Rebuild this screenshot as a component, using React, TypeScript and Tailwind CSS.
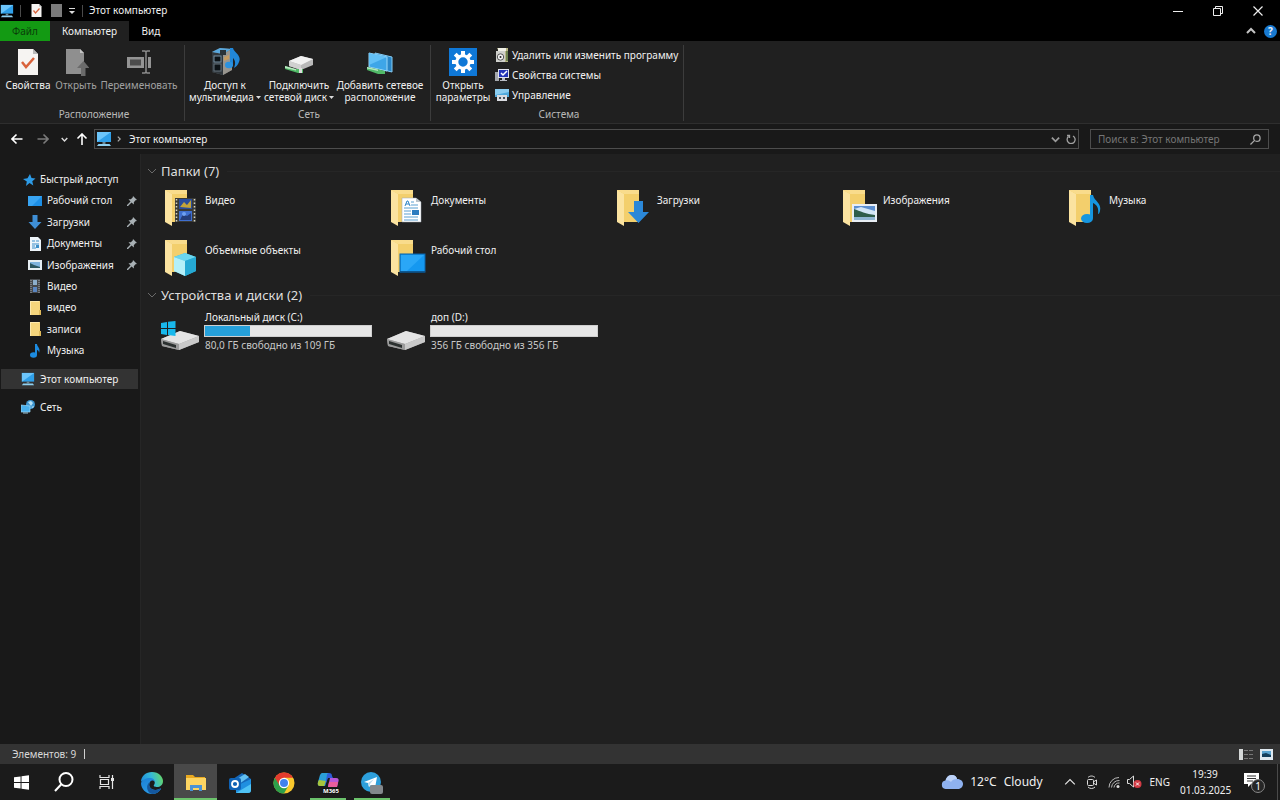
import type { ReactNode } from 'react';

/**
 * File explorer window ("This PC") with ribbon, navigation pane and taskbar
 */

interface IconProps {
  className?: string;
}

const FOLDERS = [
  { name: 'Видео', overlay: 'video' },
  { name: 'Документы', overlay: 'document' },
  { name: 'Загрузки', overlay: 'download' },
  { name: 'Изображения', overlay: 'picture' },
  { name: 'Музыка', overlay: 'music' },
  { name: 'Объемные объекты', overlay: 'cube' },
  { name: 'Рабочий стол', overlay: 'desktop' },
];

const DRIVES = [
  { name: 'Локальный диск (C:)', info: '80,0 ГБ свободно из 109 ГБ', used: 27, system: true },
  { name: 'доп (D:)', info: '356 ГБ свободно из 356 ГБ', used: 0, system: false },
];

function MonitorIcon({ className = 'size-4' }: IconProps) {
  return (
    <svg viewBox="0 0 16 16" className={className} aria-hidden="true">
      <rect x="1" y="1" width="14" height="10" fill="#2f9fe8" />
      <path d="M1 11V1h14z" fill="#6cc5fa" />
      <path d="M6.500 11h3v2h-3z" fill="#6a8794" />
      <path d="M2.500 13h11l1.500 2H1z" fill="#8fd0f0" />
    </svg>
  );
}

function CheckPageIcon({ className }: IconProps) {
  return (
    <svg viewBox="0 0 20 26" className={className} aria-hidden="true">
      <path d="M0 0h15l5 5v21H0z" fill="#f6f4f2" />
      <path d="M15 0v5h5z" fill="#b9b9b9" />
      <path d="M4 13l4 5 8-9" fill="none" stroke="#d9623b" strokeWidth="2.500" />
    </svg>
  );
}

function OpenIcon() {
  return (
    <svg viewBox="0 0 26 28" className="h-7 w-[26px]" aria-hidden="true">
      <path d="M3 1h14l4 4v21H3z" fill="#8f8f8f" />
      <path d="M17 1v4h4z" fill="#c4c4c4" />
      <path d="M18 28V20h-4l6.500-7 6 7h-4v8z" fill="#6b6b6b" />
    </svg>
  );
}

function RenameIcon() {
  return (
    <svg viewBox="0 0 28 28" className="size-7" aria-hidden="true">
      <rect x="2" y="9" width="24" height="11" fill="#949494" />
      <rect x="5" y="11.500" width="11" height="6" fill="#4c4c4c" />
      <rect x="19" y="8" width="4" height="13" fill="#202020" />
      <path d="M21 4v20M17 3h3l1 1 1-1h3M17 25h3l1-1 1 1h3" fill="none" stroke="#8c8c8c" strokeWidth="1.500" />
    </svg>
  );
}

function MediaIcon() {
  return (
    <svg viewBox="0 0 30 28" className="h-7 w-[30px]" aria-hidden="true">
      <path d="M2 4l8-4 12 1v21l-9 5-11-3z" fill="#5d6468" />
      <path d="M2 4l11 2v21L2 24z" fill="#30373c" />
      <path d="M2 4l8-4 12 1-9 5z" fill="#58a7dc" />
      <path d="M13 6l9-5v21l-9 5z" fill="#99968f" />
      <rect x="4" y="8" width="7" height="6" fill="#0d1317" stroke="#7791a3" />
      <rect x="4" y="16" width="7" height="7" fill="#0d1317" stroke="#66757e" />
      <path d="M10 2h6v5h-6z" fill="#2b3338" />
      <path d="M14 9l5-2v4l-5 2z" fill="#c79d62" />
      <path d="M20 0h3c1 5 9 7 6 14-1 3-3 5-5 6 2-5 1-8-1-10v8h-3z" fill="#2187d8" />
      <ellipse cx="19" cy="17" rx="4" ry="3.200" fill="#2a92e0" />
    </svg>
  );
}

function NetworkDriveIcon() {
  return (
    <svg viewBox="0 0 30 28" className="h-7 w-[30px]" aria-hidden="true">
      <path d="M5 13l12-5 12 3v6l-12 5-12-4z" fill="#b9b9b9" />
      <path d="M5 13l12-5 12 3-12 6z" fill="#f1f1f1" />
      <path d="M5 13l12 4v5L5 18z" fill="#d0d0d0" />
      <path d="M1 18l10 3h8v4h-5L1 21z" fill="#4fb865" />
      <path d="M1 18l11 3v1.500L1 20z" fill="#b7e6bf" />
      <path d="M15 20h3v5h-3z" fill="#dcdcdc" />
    </svg>
  );
}

function NetworkPlaceIcon() {
  return (
    <svg viewBox="0 0 28 28" className="size-7" aria-hidden="true">
      <path d="M9 5l17 4v15L9 20z" fill="#2a86c6" stroke="#86cdf4" />
      <path d="M3 5l18 4v14L3 19z" fill="#3ea6e8" stroke="#9cd9fa" />
      <path d="M3 5l18 4L3 17z" fill="#63c1f7" />
      <path d="M1 19l10 2 8 2v3h-7L1 22z" fill="#51b968" />
      <path d="M1 19l11 2.500v1.500L1 20.500z" fill="#b4e6c0" />
    </svg>
  );
}

function SettingsIcon() {
  return (
    <svg viewBox="0 0 28 28" className="size-7" aria-hidden="true">
      <rect width="28" height="28" fill="#0f78d7" />
      <path
        d="M14 3v5M14 20v5M3 14h5M20 14h5M6.200 6.200l4 4M17.800 17.800l4 4M21.800 6.200l-4 4M10.200 17.800l-4 4"
        stroke="#fff"
        strokeWidth="4"
      />
      <circle cx="14" cy="14" r="6.200" fill="#0f78d7" stroke="#fff" strokeWidth="3" />
    </svg>
  );
}

function UninstallIcon() {
  return (
    <svg viewBox="0 0 14 14" className="size-[14px]" aria-hidden="true">
      <path d="M2 0h11v14h-3z" fill="#b7b485" />
      <path d="M3 0h8v3H3z" fill="#f0f0e6" />
      <rect x="1" y="3" width="9" height="11" fill="#cfd0cc" />
      <circle cx="5.500" cy="9" r="3.200" fill="#f4f4f4" stroke="#555" />
      <circle cx="5.500" cy="9" r="1" fill="#222" />
      <path d="M11 3h2v10h-2z" fill="#6d8250" />
    </svg>
  );
}

function SystemIcon() {
  return (
    <svg viewBox="0 0 14 14" className="size-[14px]" aria-hidden="true">
      <rect x="0" y="4" width="4" height="9" fill="#a5a8ad" />
      <rect x="3" y="1" width="11" height="9" fill="#dfe2ee" />
      <rect x="4" y="2" width="9" height="7" fill="#2334b6" />
      <path d="M6 5l2 2 4-4" fill="none" stroke="#fff" strokeWidth="1.500" />
      <path d="M7 10h3v2h2v1H5v-1h2z" fill="#b9bcc4" />
    </svg>
  );
}

function ManageIcon() {
  return (
    <svg viewBox="0 0 14 14" className="size-[14px]" aria-hidden="true">
      <rect width="14" height="8" y="1" fill="#4fa9dc" />
      <path d="M0 1h14v3L0 7z" fill="#8ccdf0" />
      <rect x="2" y="7" width="10" height="6" fill="#d9dbe0" />
      <path d="M4 9h2v2H4zM8 9h2v2H8z" fill="#46505a" />
    </svg>
  );
}

function Overlay({ kind }: { kind: string }) {
  switch (kind) {
    case 'video':
      return (
        <g>
          <rect x="11" y="9" width="21" height="24" fill="#3a3a36" />
          <path d="M12.500 10v23M30.500 10v23" stroke="#d8d4c0" strokeWidth="1.500" strokeDasharray="1.500 2" />
          <rect x="15" y="10" width="13" height="10" fill="#284c9c" />
          <rect x="15" y="22" width="13" height="10" fill="#3f6fd0" />
          <path d="M16 18l4-5 3 3 4-5v8z" fill="#c2a43a" />
          <path d="M16 31l3-6 4 2 4-3v7z" fill="#253d7a" />
          <circle cx="20" cy="25" r="2" fill="#6ea0f0" />
        </g>
      );
    case 'document':
      return (
        <g>
          <path d="M12 9h14l5 4v20H12z" fill="#fff" stroke="#9aa7b0" strokeWidth="0.500" />
          <path d="M26 9v4h5z" fill="#b9c3ca" />
          <path d="M15 17l2-5h1l2 5M16 15h3" stroke="#2d83c7" fill="none" />
          <path d="M21 13h3M21 16h7M14 19h14M14 22h7M14 25h7M14 28h14M14 31h14" stroke="#5b9fd0" />
          <rect x="22" y="21" width="7" height="5" fill="#2c7cc0" />
        </g>
      );
    case 'download':
      return <path d="M18 12h9v11h6L22.500 34 12 23h6z" fill="#2b88d8" />;
    case 'picture':
      return (
        <g>
          <rect x="10" y="15" width="25" height="18" fill="#e9eef4" />
          <rect x="12" y="17" width="21" height="14" fill="#5c8fd0" />
          <path d="M12 20l7-2 14 4v5H12z" fill="#d3e6f6" />
          <path d="M12 20c6 2 12 5 21 6v2H12z" fill="#2f5d4a" />
          <path d="M12 28h21v3H12z" fill="#8fb5d2" />
        </g>
      );
    case 'music':
      return (
        <g fill="#1696e0">
          <ellipse cx="19" cy="29.500" rx="6" ry="4.500" />
          <path d="M22 6h3c1 6 9 8 7 16-.5 2-1 3-2 3 1-6-1-9-5-11v15h-3z" />
        </g>
      );
    case 'cube':
      return (
        <g>
          <path d="M21 14l11 4v14l-11 5-11-5V18z" fill="#35b8dc" />
          <path d="M10 18l11-4 11 4-11 4z" fill="#6bd6ee" />
          <path d="M10 18l11 4v15l-11-5z" fill="#b4eff8" />
          <path d="M21 22l11-4v14l-11 5z" fill="#25a9d4" />
        </g>
      );
    default:
      return (
        <g>
          <rect x="10" y="15" width="25" height="18" fill="#1598f0" stroke="#0b63a8" />
          <path d="M11 16h23L17 32h-6z" fill="#2aa7f7" />
          <path d="M10 33h25" stroke="#0c4d7f" strokeWidth="1.500" />
        </g>
      );
  }
}

function FolderIcon({ kind }: { kind: string }) {
  return (
    <svg viewBox="0 0 36 38" className="h-[38px] w-9 shrink-0" aria-hidden="true">
      <path d="M1 1h22v32H8z" fill="#f3cf6c" />
      <path d="M1 1l7 4v32l-7-4z" fill="#fbe3a0" />
      <path d="M8 5l-7-4h22v4z" fill="#f9dc8c" />
      <Overlay kind={kind} />
    </svg>
  );
}

function DriveIcon({ system }: { system: boolean }) {
  return (
    <svg viewBox="0 0 40 32" className="h-8 w-10 shrink-0" aria-hidden="true">
      <path d="M1 20l19-8 19 5v6l-20 8-17-4z" fill="#a4a4a4" />
      <path d="M1 20l19-8 19 5-20 8z" fill="#e4e4e4" />
      <path d="M1 20l18 5v6L2 27z" fill="#9b9b9b" />
      <path d="M3 22l13 4v3L3 25z" fill="#2c3130" />
      <path d="M19 25l20-8v6l-20 8z" fill="#c9c9c9" />
      {system && (
        <path d="M1 4l6-1v6H1zM8 2.800L15.500 2v7H8zM1 10h6v6l-6-1zM8 10h7.500v7L8 16z" fill="#18b8ec" />
      )}
    </svg>
  );
}

function NavIcon({ kind }: { kind: string }) {
  const base = 'size-[14px] shrink-0';
  switch (kind) {
    case 'star':
      return (
        <svg viewBox="0 0 14 14" className={base} aria-hidden="true">
          <path d="M8 1l1.500 4 4 .5-3.200 2.700 1 4.300L7.500 10 4 13l.8-4.500L1 6l4.500-.7z" fill="#2d9be6" />
        </svg>
      );
    case 'desktop':
      return (
        <svg viewBox="0 0 14 14" className={base} aria-hidden="true">
          <path d="M0 2h14v10H0z" fill="#1d8fe6" />
          <path d="M0 2h14L4 12H0z" fill="#38a4f2" />
        </svg>
      );
    case 'download':
      return (
        <svg viewBox="0 0 14 14" className={base} aria-hidden="true">
          <path d="M4.500 0h5v7h4L7 14 .5 7h4z" fill="#3f8fd6" />
        </svg>
      );
    case 'document':
      return (
        <svg viewBox="0 0 14 14" className={base} aria-hidden="true">
          <path d="M2 0h8l3 3v11H2z" fill="#eef5fa" />
          <path d="M4 4h3M8 4h3M4 7h7M4 9h3M4 11h4" stroke="#3c8fc9" strokeWidth="1.200" />
          <path d="M8 8h3v3H8z" fill="#3c8fc9" />
        </svg>
      );
    case 'picture':
      return (
        <svg viewBox="0 0 14 14" className={base} aria-hidden="true">
          <path d="M0 2h14v10H0z" fill="#e6edf2" />
          <path d="M2 4h10v6H2z" fill="#7fb3de" />
          <path d="M2 5l4 2 6 2v1H2z" fill="#2b5560" />
        </svg>
      );
    case 'video':
      return (
        <svg viewBox="0 0 14 14" className={base} aria-hidden="true">
          <path d="M2 0h10v14H2z" fill="#46494c" />
          <path d="M3 1v13M11 1v13" stroke="#a8adb1" strokeDasharray="1 1" />
          <path d="M5 1h4v5H5z" fill="#8caecb" />
          <path d="M5 8h4v5H5z" fill="#5a86c2" />
        </svg>
      );
    case 'folder':
      return (
        <svg viewBox="0 0 14 14" className={base} aria-hidden="true">
          <path d="M2 0h10v9h1v5H2z" fill="#f5d57c" />
          <path d="M2 0h9v1H3v13H2z" fill="#fce9ae" />
          <path d="M11 9h2v5h-2z" fill="#dfb95a" />
        </svg>
      );
    case 'music':
      return (
        <svg viewBox="0 0 14 14" className={base} aria-hidden="true">
          <ellipse cx="5.500" cy="11" rx="3.500" ry="2.800" fill="#1c8be0" />
          <path d="M7 0h2c0 3 4 4 2 9 0-2-1-3-2-3v5H7z" fill="#1c8be0" />
        </svg>
      );
    case 'network':
      return (
        <svg viewBox="0 0 14 14" className={base} aria-hidden="true">
          <circle cx="9.500" cy="4.500" r="4.500" fill="#3d95cf" />
          <path d="M7 2l3-1 2 2-2 3zM10 7l3-1-1 2z" fill="#b4e0f5" />
          <path d="M0 5l9 1v6H0z" fill="#49b1ee" stroke="#9ed8f7" strokeWidth="0.700" />
          <path d="M2 13h5" stroke="#9ac6dc" />
        </svg>
      );
    default:
      return <MonitorIcon className={base} />;
  }
}

function PinIcon() {
  return (
    <svg viewBox="0 0 10 10" className="size-[10px]" aria-hidden="true">
      <path d="M6 0l4 4-1.500.3-1.700 2 .1 2.200L4.500 6.500 1 10H0V9l3.500-3.500-2-2.300L3.800 3.300 5.700 1.500z" fill="#a8b0b4" />
    </svg>
  );
}

function Caret() {
  return (
    <svg viewBox="0 0 5 3" className="mb-px ml-[2px] inline-block h-[3px] w-[5px] align-middle" aria-hidden="true">
      <path d="M0 0h5L2.500 3z" fill="#dcdcdc" />
    </svg>
  );
}

function Chevron({ className }: IconProps) {
  return (
    <svg viewBox="0 0 10 10" className={className} fill="none" stroke="currentColor" aria-hidden="true">
      <path d="M1 3l4 4 4-4" />
    </svg>
  );
}

function TitleBar() {
  return (
    <header className="flex h-[21px] items-center bg-black">
      <MonitorIcon className="size-[14px]" />
      <span className="ml-[6px] h-3 w-px bg-[#4a4a4a]" />
      <button aria-label="Свойства" className="ml-[10px]">
        <CheckPageIcon className="h-[13px] w-[11px]" />
      </button>
      <button aria-label="Новая папка" className="ml-[9px] h-[13px] w-[11px] bg-[#7b7b7b]" />
      <button aria-label="Настройка панели" className="ml-[6px]">
        <svg viewBox="0 0 8 8" className="size-2" aria-hidden="true">
          <path d="M1 1.500h6" stroke="#ddd" />
          <path d="M1 4h6L4 7z" fill="#ddd" />
        </svg>
      </button>
      <span className="ml-[6px] h-3 w-px bg-[#4a4a4a]" />
      <h1 className="ml-[6px] text-[10px]">Этот компьютер</h1>
      <div className="ml-auto flex h-5 pr-[2px]">
        <button aria-label="Свернуть" className="flex w-10 items-center justify-center">
          <svg viewBox="0 0 10 10" className="size-[10px]" stroke="#eee" aria-hidden="true">
            <path d="M0 5.500h10" />
          </svg>
        </button>
        <button aria-label="Восстановить" className="flex w-10 items-center justify-center">
          <svg viewBox="0 0 10 10" className="size-[10px]" fill="none" stroke="#eee" aria-hidden="true">
            <path d="M.5 2.500h7v7h-7zM2.500 2.500v-2h7v7h-2" />
          </svg>
        </button>
        <button aria-label="Закрыть" className="flex w-10 items-center justify-center">
          <svg viewBox="0 0 10 10" className="size-[10px]" stroke="#eee" strokeWidth="1.200" aria-hidden="true">
            <path d="M.5.5l9 9M9.500.5l-9 9" />
          </svg>
        </button>
      </div>
    </header>
  );
}

function RibbonTabs() {
  return (
    <nav className="flex h-5 items-stretch bg-black text-[10px]">
      <button className="w-[50px] bg-[#139a13] text-[#0a3d0a]">Файл</button>
      <button className="w-[79px] bg-[#202020]">Компьютер</button>
      <button className="w-11">Вид</button>
      <div className="ml-auto flex items-center gap-[8px] pr-[3px]">
        <button aria-label="Свернуть ленту">
          <Chevron className="size-[10px] rotate-180 stroke-2 text-[#c4c4c4]" />
        </button>
        <button aria-label="Справка" className="flex size-[13px] items-center justify-center rounded-full bg-[#1879d0] text-[10px] leading-none font-bold">
          ?
        </button>
      </div>
    </nav>
  );
}

interface RibbonButtonProps {
  icon: ReactNode;
  width: string;
  disabled?: boolean;
  children: ReactNode;
}

function RibbonButton({ icon, width, disabled, children }: RibbonButtonProps) {
  return (
    <button
      disabled={disabled}
      className={`flex flex-col items-center pt-[3px] leading-3 whitespace-nowrap ${width} ${disabled ? 'text-[#a0a0a0]' : ''}`}
    >
      <span className="mb-[3px] flex h-7 items-center">{icon}</span>
      <span>{children}</span>
    </button>
  );
}

function RibbonGroup({ label, className, children }: { label: string; className: string; children: ReactNode }) {
  return (
    <section className={`flex flex-col border-r border-[#3c3c3c] ${className}`}>
      <div className="flex h-[60px] items-start">{children}</div>
      <h2 className="mt-[3px] text-center leading-3 text-[#b8b8b8]">{label}</h2>
    </section>
  );
}

function Ribbon() {
  return (
    <div className="flex h-[83px] border-b border-[#2e2e2e] bg-[#202020] pt-1 pb-[2px] text-[10px]">
      <RibbonGroup label="Расположение" className="w-[185px] pl-1">
        <RibbonButton width="w-12" icon={<CheckPageIcon className="h-[26px] w-5" />}>Свойства</RibbonButton>
        <RibbonButton width="w-12" icon={<OpenIcon />} disabled>Открыть</RibbonButton>
        <RibbonButton width="w-[78px]" icon={<RenameIcon />} disabled>Переименовать</RibbonButton>
      </RibbonGroup>
      <RibbonGroup label="Сеть" className="w-[246px] pl-[3px]">
        <RibbonButton width="w-[74px]" icon={<MediaIcon />}>
          Доступ к<br />мультимедиа<Caret />
        </RibbonButton>
        <RibbonButton width="w-[74px]" icon={<NetworkDriveIcon />}>
          Подключить<br />сетевой диск<Caret />
        </RibbonButton>
        <RibbonButton width="w-[88px]" icon={<NetworkPlaceIcon />}>
          Добавить сетевое<br />расположение
        </RibbonButton>
      </RibbonGroup>
      <RibbonGroup label="Система" className="w-[253px] pl-1">
        <RibbonButton width="w-14" icon={<SettingsIcon />}>
          Открыть<br />параметры
        </RibbonButton>
        <div className="ml-1 flex flex-col">
          <button className="flex h-5 items-center gap-[3px]"><UninstallIcon />Удалить или изменить программу</button>
          <button className="flex h-5 items-center gap-[3px]"><SystemIcon />Свойства системы</button>
          <button className="flex h-5 items-center gap-[3px]"><ManageIcon />Управление</button>
        </div>
      </RibbonGroup>
    </div>
  );
}

function AddressBar() {
  return (
    <div className="flex h-[30px] items-center bg-[#191919] pr-[11px] pl-[11px] text-[10px]">
      <button aria-label="Назад">
        <svg viewBox="0 0 12 12" className="size-3" fill="none" stroke="#fff" strokeWidth="1.600" aria-hidden="true">
          <path d="M11.500 6H1M5.500 1.500L1 6l4.500 4.500" />
        </svg>
      </button>
      <button aria-label="Вперед" className="ml-[14px]">
        <svg viewBox="0 0 12 12" className="size-3" fill="none" stroke="#7a7a7a" strokeWidth="1.600" aria-hidden="true">
          <path d="M.5 6H11M6.500 1.500L11 6l-4.500 4.500" />
        </svg>
      </button>
      <button aria-label="Последние расположения" className="ml-3">
        <Chevron className="size-[7px] stroke-2 text-[#ddd]" />
      </button>
      <button aria-label="Вверх" className="ml-2">
        <svg viewBox="0 0 12 12" className="size-3" fill="none" stroke="#fff" strokeWidth="1.600" aria-hidden="true">
          <path d="M6 12V1M1.500 5.500L6 1l4.500 4.500" />
        </svg>
      </button>
      <div className="ml-[6px] flex h-5 flex-1 items-center border border-[#4d4d4d] pr-[2px] pl-px">
        <MonitorIcon />
        <Chevron className="ml-1 size-[6px] -rotate-90 stroke-2 text-[#aaa]" />
        <span className="ml-[7px]">Этот компьютер</span>
        <button aria-label="Предыдущие расположения" className="ml-auto">
          <Chevron className="size-[9px] stroke-2 text-[#9a9a9a]" />
        </button>
        <button aria-label="Обновить" className="ml-[6px]">
          <svg viewBox="0 0 10 10" className="size-[10px]" fill="none" stroke="#a0a0a0" strokeWidth="1.300" aria-hidden="true">
            <path d="M7 2a4 4 0 1 1-4.500.5M1 1.500h2.500V4" />
          </svg>
        </button>
      </div>
      <label className="ml-[11px] flex h-5 w-[179px] items-center border border-[#4d4d4d] px-[7px]">
        <input
          type="search"
          aria-label="Поиск"
          placeholder="Поиск в: Этот компьютер"
          className="min-w-0 flex-1 bg-transparent outline-none placeholder:text-[#757575]"
        />
        <svg viewBox="0 0 12 12" className="size-[11px]" fill="none" stroke="#a8a8a8" strokeWidth="1.400" aria-hidden="true">
          <circle cx="7.500" cy="4.500" r="3.500" />
          <path d="M5 7L.5 11.500" />
        </svg>
      </label>
    </div>
  );
}

const QUICK_ACCESS = [
  { name: 'Рабочий стол', icon: 'desktop', pinned: true },
  { name: 'Загрузки', icon: 'download', pinned: true },
  { name: 'Документы', icon: 'document', pinned: true },
  { name: 'Изображения', icon: 'picture', pinned: true },
  { name: 'Видео', icon: 'video', pinned: false },
  { name: 'видео', icon: 'folder', pinned: false },
  { name: 'записи', icon: 'folder', pinned: false },
  { name: 'Музыка', icon: 'music', pinned: false },
];

function Sidebar() {
  return (
    <aside className="w-[141px] shrink-0 border-r border-[#262626] bg-[#191919] pt-[15px] text-[10px]">
      <ul className="flex h-[192px] flex-col justify-between">
        <li>
          <a href="#quick" className="flex h-[21px] items-center gap-1 pl-[22px]">
            <NavIcon kind="star" />
            Быстрый доступ
          </a>
        </li>
        {QUICK_ACCESS.map((item) => (
          <li key={item.name}>
            <a href={`#${item.icon}`} className="flex h-[21px] items-center gap-[5px] pr-[3px] pl-7">
              <NavIcon kind={item.icon} />
              <span className="flex-1 whitespace-nowrap">{item.name}</span>
              {item.pinned && <PinIcon />}
            </a>
          </li>
        ))}
      </ul>
      <a href="#pc" className="mt-2 mr-[2px] ml-px flex h-5 items-center gap-[5px] bg-[#333333] pl-5">
        <NavIcon kind="pc" />
        Этот компьютер
      </a>
      <a href="#network" className="mt-2 flex h-5 items-center gap-[5px] pl-[21px]">
        <NavIcon kind="network" />
        Сеть
      </a>
    </aside>
  );
}

function SectionHeader({ children }: { children: ReactNode }) {
  return (
    <div className="flex h-4 items-center">
      <Chevron className="-ml-[3px] size-[10px] text-[#6a6a6a]" />
      <h2 className="mr-2 ml-1 text-[13px] leading-4 text-[#dedede]">{children}</h2>
      <span className="h-px flex-1 bg-[#262626]" />
    </div>
  );
}

function Content() {
  return (
    <main className="min-w-0 flex-1 bg-[#202020] pt-[9px] pl-[9px] text-[10px] leading-4">
      <SectionHeader>Папки (7)</SectionHeader>
      <ul className="mt-2 grid grid-cols-[repeat(auto-fill,226px)]">
        {FOLDERS.map((folder) => (
          <li key={folder.name} className="flex h-[50px] gap-[5px] pt-[2px] pl-[14px]">
            <FolderIcon kind={folder.overlay} />
            <span className="mt-[3px] h-4">{folder.name}</span>
          </li>
        ))}
      </ul>
      <SectionHeader>Устройства и диски (2)</SectionHeader>
      <ul className="mt-[6px] grid grid-cols-[repeat(auto-fill,226px)]">
        {DRIVES.map((drive) => (
          <li key={drive.name} className="flex gap-1 pl-[10px]">
            <span className="pt-[10px]">
              <DriveIcon system={drive.system} />
            </span>
            <div className="w-[168px]">
              <p className="pl-px">{drive.name}</p>
              <div className="h-3 border border-[#cfcfcf] bg-[#e6e6e6]">
                <div className="h-full bg-[#26a0da]" style={{ width: `${drive.used}%` }} />
              </div>
              <p className="pl-px text-[#c8c8c8]">{drive.info}</p>
            </div>
          </li>
        ))}
      </ul>
    </main>
  );
}

function StatusBar() {
  return (
    <footer className="flex h-5 items-center bg-[#333333] pr-[7px] pl-3 text-[10px] text-[#d8d8d8]">
      <span>Элементов: 9</span>
      <span className="ml-2 h-[10px] w-px bg-[#d0d0d0]" />
      <div className="ml-auto flex items-center gap-[7px]">
        <button aria-label="Таблица">
          <svg viewBox="0 0 14 11" className="h-[11px] w-[14px]" aria-hidden="true">
            <path d="M0 0h4v11H0z" fill="#d5d8d8" />
            <path d="M5 1.500h4M10 1.500h4M5 5.500h4M10 5.500h4M5 9.500h4M10 9.500h4" stroke="#777" />
          </svg>
        </button>
        <button aria-label="Крупные значки">
          <svg viewBox="0 0 13 11" className="h-[11px] w-[13px]" aria-hidden="true">
            <path d="M0 0h13v11H0z" fill="#dfe9f0" />
            <path d="M2 2h9v6H2z" fill="#5aa3cf" />
            <path d="M2 5l4-1 5 2v2H2z" fill="#143f5c" />
          </svg>
        </button>
      </div>
    </footer>
  );
}

function TaskButton({ label, state, children }: { label: string; state?: 'active' | 'open'; children: ReactNode }) {
  return (
    <button
      aria-label={label}
      className={`flex w-[43px] flex-col items-center ${state === 'active' ? 'bg-[#494949]' : ''}`}
    >
      <span className="flex h-[34px] items-center pt-[3px]">{children}</span>
      {state && <span className={`h-[2px] bg-[#6cc36c] ${state === 'active' ? 'w-full' : 'w-9'}`} />}
    </button>
  );
}

function Taskbar() {
  return (
    <div className="flex h-9 items-stretch bg-[#1b1b1b]">
      <button aria-label="Пуск" className="flex w-[42px] items-center justify-center">
        <svg viewBox="0 0 16 16" className="size-[15px]" fill="#fff" aria-hidden="true">
          <path d="M0 2.500L7 1.500V7.500H0zM8 1.400L16 .2V7.500H8zM0 8.500h7v6l-7-1zM8 8.500h8v7.300L8 14.600z" />
        </svg>
      </button>
      <button aria-label="Поиск в Windows" className="flex w-[43px] items-center justify-center">
        <svg viewBox="0 0 20 20" className="size-5" fill="none" stroke="#fff" strokeWidth="2" aria-hidden="true">
          <circle cx="12" cy="7.500" r="6.500" />
          <path d="M7.300 12.200L1 19" />
        </svg>
      </button>
      <button aria-label="Представление задач" className="flex w-[43px] items-center justify-center">
        <svg viewBox="0 0 16 16" className="size-4" fill="none" stroke="#e6e6e6" strokeWidth="1.200" aria-hidden="true">
          <path d="M1 1v2.500h9V1M1 15v-2.500h9V15M1.500 5.500h8v5h-8zM13.500 1v14" />
          <path d="M12 4h3v3h-3z" fill="#e6e6e6" stroke="none" />
        </svg>
      </button>
      <div className="ml-[2px] flex gap-px">
        <TaskButton label="Edge">
          <svg viewBox="0 0 22 22" className="size-[22px]" aria-hidden="true">
            <defs>
              <linearGradient id="edgeTop" x1="0" y1="0.500" x2="1" y2="0.300">
                <stop offset="0" stopColor="#1f8fdc" />
                <stop offset="0.500" stopColor="#35b9d8" />
                <stop offset="1" stopColor="#66d865" />
              </linearGradient>
              <linearGradient id="edgeBody" x1="0" y1="0" x2="0.600" y2="1">
                <stop offset="0" stopColor="#1c7fd6" />
                <stop offset="1" stopColor="#2a9ce6" />
              </linearGradient>
            </defs>
            <path d="M0 10C0 4 5 0 11 0c7 0 11 5 11 9 0 4-3 6-6 6-2 0-4-1-3-2 2-3 0-6-4-6-4 0-8 2-9 3z" fill="url(#edgeTop)" />
            <path d="M0 11C1 8 5 6 9 6c3 0 5 2 5 4-1-2-4-2-5 0-3 5 3 10 9 7 1 0 2-1 2 0-2 3-5 5-9 5C5 22 0 17 0 11z" fill="url(#edgeBody)" />
            <path d="M9 10c-3 5 3 10 9 7 1 0 2-1 2 0-2 3-5 5-9 5-5-1-7-9-2-12z" fill="#14579e" />
          </svg>
        </TaskButton>
        <TaskButton label="Проводник" state="active">
          <svg viewBox="0 0 20 18" className="h-[18px] w-5" aria-hidden="true">
            <path d="M0 1h7l2 2h10v13H0z" fill="#e9a920" />
            <path d="M0 4h20v12H0z" fill="#fcd462" />
            <path d="M4 17v-6h12v6h-3v-3H7v3z" fill="#4a92d4" />
          </svg>
        </TaskButton>
        <TaskButton label="Outlook">
          <svg viewBox="0 0 22 22" className="size-[22px]" aria-hidden="true">
            <path d="M4 7l9-6 9 6v12H7z" fill="#1667b8" />
            <path d="M8 7l8-5 4 3-10 7z" fill="#62c0f2" />
            <path d="M7 14l15-7v11q0 3-3 3H7z" fill="#1f8fe0" />
            <path d="M7 21l15-9v6q0 3-3 3z" fill="#4fc3f5" />
            <rect x="0" y="6" width="12" height="12" rx="2" fill="#0f62b5" />
            <circle cx="6" cy="12" r="3" fill="none" stroke="#fff" strokeWidth="1.800" />
          </svg>
        </TaskButton>
        <TaskButton label="Chrome">
          <svg viewBox="0 0 22 22" className="size-[22px]" aria-hidden="true">
            <circle cx="11" cy="11" r="10.500" fill="#f9c82d" />
            <path d="M1.900 5.700A10.500 10.500 0 0 0 11 21.500l4.500-8L11 11z" fill="#2da04b" />
            <path d="M1.900 5.700A10.500 10.500 0 0 1 20.100 5.700H11v5.300l-4.500 2.600z" fill="#e33b2e" />
            <circle cx="11" cy="11" r="5.200" fill="#fff" />
            <circle cx="11" cy="11" r="4" fill="#3f82ee" />
          </svg>
        </TaskButton>
        <TaskButton label="Microsoft 365" state="open">
          <svg viewBox="0 0 24 22" className="h-[22px] w-6" aria-hidden="true">
            <path d="M6 1h7l-4 13H4q-3 0-2-4l2-7q1-2 2-2z" fill="#2a9fd8" />
            <path d="M3 8l7 1-2 5H4q-3 0-2-4z" fill="#a8c63c" />
            <path d="M13 1q3 0 3 3l1 2h-5l-3 8 2-11q0-2 2-2z" fill="#2f5bd8" />
            <path d="M14 6h6q4 0 2 5l-1 4h-9z" fill="#b757d8" />
            <path d="M13 10h9l-1 5h-9z" fill="#ea5d9d" />
            <text x="15" y="21" fill="#fff" stroke="#111" strokeWidth="1.500" paintOrder="stroke" fontSize="6" fontWeight="700" textAnchor="middle">M365</text>
          </svg>
        </TaskButton>
        <TaskButton label="Telegram" state="open">
          <svg viewBox="0 0 24 24" className="size-6" aria-hidden="true">
            <circle cx="11" cy="11" r="10" fill="#2d9fdb" />
            <path d="M4 11l13-5-2 11-4-3-2 2-1-4z" fill="#fff" />
            <path d="M8 12l6-4-4 5-1 3z" fill="#b6d9ee" />
            <rect x="10" y="14" width="13" height="9" rx="2" fill="#83888c" />
          </svg>
        </TaskButton>
      </div>

      <div className="ml-auto flex items-center">
        <button className="flex items-center text-[12px]">
          <svg viewBox="0 0 22 14" className="mr-[7px] h-[14px] w-[22px]" aria-hidden="true">
            <path d="M4.500 14a4.300 4.300 0 0 1 0-8.500C6 1 8.500 0 11 0s4.500 1.500 5 4c4 0 6 2.500 6 5s-2 5-5 5z" fill="#8fb2f0" />
            <path d="M4.500 5.500C6 1 8.500 0 11 0s4.500 1.500 5 4c-3 0-5 1-6 3-1.500-1.500-3.500-2-5.500-1.500z" fill="#bcd2f8" />
          </svg>
          <span className="mr-[7px]">12°C</span>
          <span>Cloudy</span>
        </button>
        <button aria-label="Скрытые значки" className="ml-[21px]">
          <Chevron className="size-3 rotate-180 text-[#e6e6e6]" />
        </button>
        <button aria-label="Камера" className="ml-[10px]">
          <svg viewBox="0 0 12 14" className="h-[14px] w-3" fill="none" stroke="#dcdcdc" aria-hidden="true">
            <rect x="1.500" y="4.500" width="6" height="6" rx="1" />
            <path d="M8 6.500l2.500-1.500v5L8 8.500M2 2.500c2-2 5-2 7 0M2 12c2 2 5 2 7 0" />
          </svg>
        </button>
        <button aria-label="Сеть" className="ml-[10px]">
          <svg viewBox="0 0 12 12" className="size-3" fill="none" stroke="#b8b8b8" aria-hidden="true">
            <path d="M1 11.500A10 10 0 0 1 11 1.500M3.500 11.500A7.500 7.500 0 0 1 11.500 4.500M6 11.500a5 5 0 0 1 5.500-4.500" />
            <circle cx="10" cy="10.500" r="1.500" fill="#ddd" stroke="none" />
          </svg>
        </button>
        <button aria-label="Звук выключен" className="ml-[7px]">
          <svg viewBox="0 0 15 14" className="h-[14px] w-[15px]" aria-hidden="true">
            <path d="M.5 4.500h2L6.500 1v11l-4-3.500h-2z" fill="none" stroke="#ddd" />
            <circle cx="10.500" cy="9" r="4" fill="#d23b45" />
            <path d="M9 7.500l3 3M12 7.500l-3 3" stroke="#fff" />
          </svg>
        </button>
        <button className="ml-[8px] text-[10px]">ENG</button>
        <button className="ml-[10px] w-[50px] text-center text-[10px] leading-4 whitespace-nowrap">
          19:39<br />01.03.2025
        </button>
        <button aria-label="Уведомления" className="ml-[14px]">
          <svg viewBox="0 0 22 22" className="size-[22px]" aria-hidden="true">
            <path d="M0 2h15v11H7l-3 3v-3H0z" fill="#fff" />
            <path d="M3 5h9M3 7.500h9M3 10h6" stroke="#333" />
            <circle cx="14" cy="15" r="6.500" fill="#262626" stroke="#888" />
            <text x="14" y="19" fill="#fff" fontSize="10" textAnchor="middle">1</text>
          </svg>
        </button>
        <span className="ml-[11px] h-9 w-px bg-[#4a4a4a]" />
        <span className="w-[2px]" />
      </div>
    </div>
  );
}

export default function App() {
  return (
    <div className="flex min-h-screen flex-col bg-[#202020] font-['Noto_Sans','Open_Sans',sans-serif] text-[#f0f0f0]">
      <TitleBar />
      <RibbonTabs />
      <Ribbon />
      <AddressBar />
      <div className="flex flex-1">
        <Sidebar />
        <Content />
      </div>
      <StatusBar />
      <Taskbar />
    </div>
  );
}
